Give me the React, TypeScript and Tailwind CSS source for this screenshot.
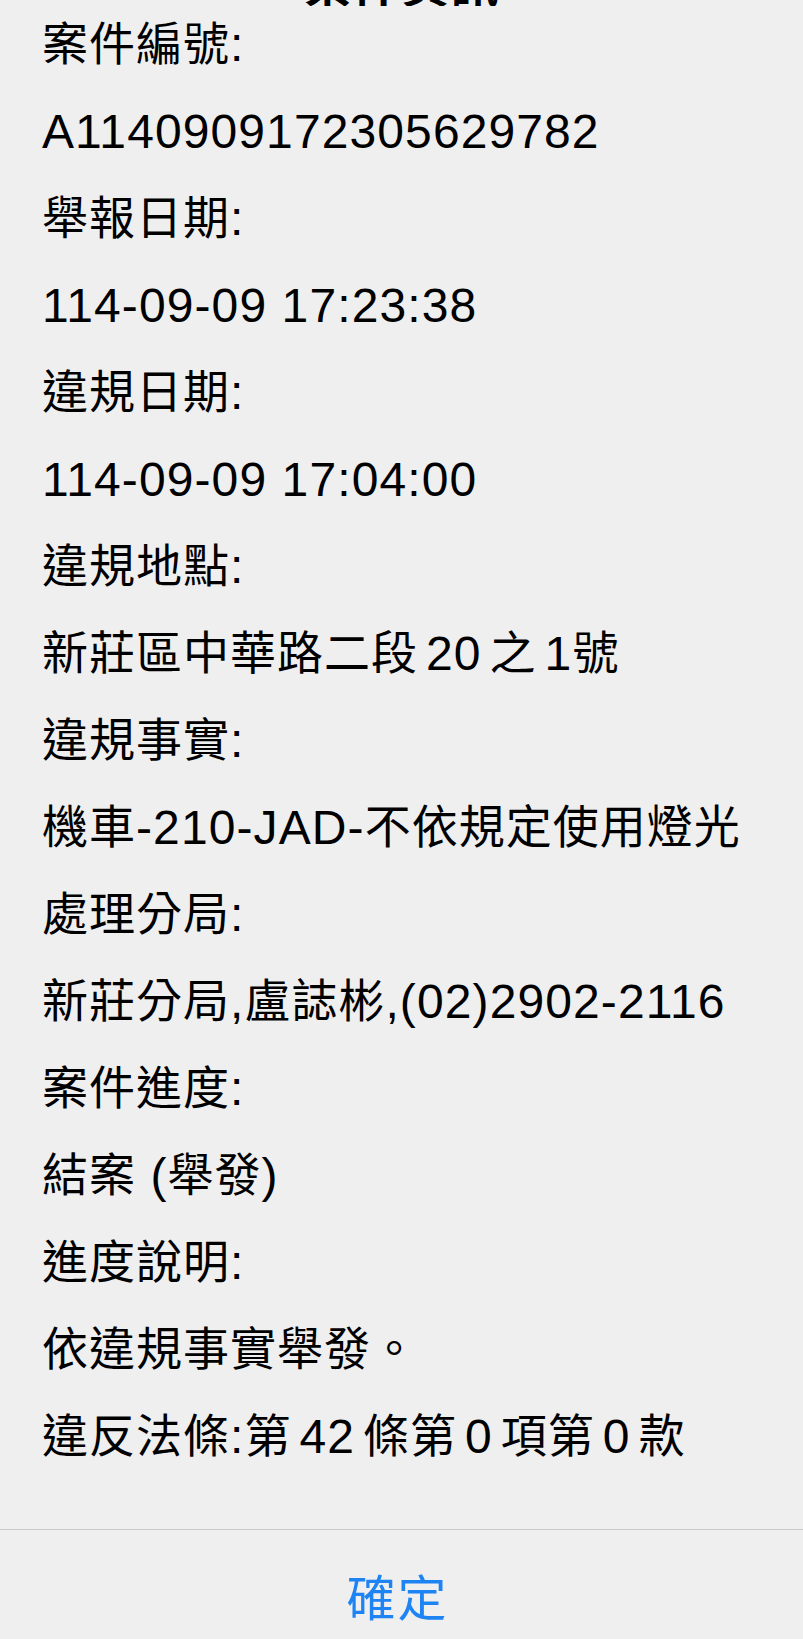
import React from 'react';

// "|" marks the small gap iOS puts between CJK text and digits
const rows: string[] = [
  '案件編號:',
  'A1140909172305629782',
  '舉報日期:',
  '114-09-09 17:23:38',
  '違規日期:',
  '114-09-09 17:04:00',
  '違規地點:',
  '新莊區中華路二段|20|之|1號',
  '違規事實:',
  '機車-210-JAD-不依規定使用燈光',
  '處理分局:',
  '新莊分局,盧誌彬,(02)2902-2116',
  '案件進度:',
  '結案 (舉發)',
  '進度說明:',
  '依違規事實舉發。',
  '違反法條:第|42|條第|0|項第|0|款',
];

const cjk = /^[\u3000-\u9fff\uff00-\uffef]+$/;

function Line({ text }: { text: string }) {
  const parts = text.split(/(\||[\u3000-\u9fff\uff00-\uffef]+)/).filter(Boolean);
  return (
    <div className="h-[87px] flex items-center whitespace-pre">
      {parts.map((p, i) => {
        if (p === '|') return <span key={i} className="inline-block w-[8px]" />;
        if (cjk.test(p)) {
          return (
            <span key={i} className="text-[46px] tracking-[1px]">
              {p}
            </span>
          );
        }
        return (
          <span key={i} className="text-[48px] tracking-[1.1px]">
            {p}
          </span>
        );
      })}
    </div>
  );
}

export default function App() {
  return (
    <div
      className="w-[803px] h-[1639px] overflow-hidden bg-[#efeff0] text-black"
      style={{ fontFamily: '"Liberation Sans", "Noto Sans CJK TC", sans-serif' }}
    >
      {/* 標題被捲到上方，只露出底部 */}
      <div className="h-[6px] overflow-hidden flex justify-center">
        <div className="-mt-[43px] text-[48px] leading-[58px] font-bold tracking-[1px] shrink-0">案件資訊</div>
      </div>

      <div className="pl-[42px] pr-4 -mt-[5px] h-[1528px]">
        {rows.map((row, i) => (
          <Line key={i} text={row} />
        ))}
      </div>

      <div className="h-px bg-[#c9c9cc]" />

      <div className="flex justify-center pt-[45px] pr-[8px]">
        <button className="text-[49px] leading-[48px] tracking-[2px] text-[#1f84f3]">確定</button>
      </div>
    </div>
  );
}
